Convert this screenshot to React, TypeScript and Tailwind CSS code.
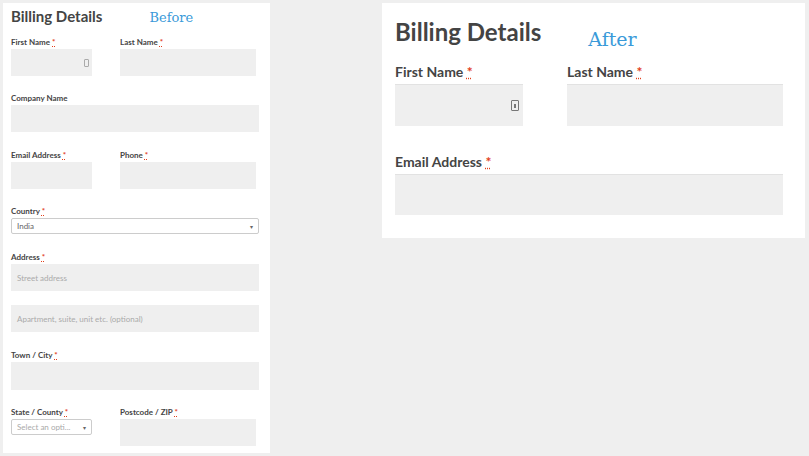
const Req = () => <span className="text-[#e2401c] underline decoration-dotted">*</span>;

function SmallLabel({ children, req = true }: { children: string; req?: boolean }) {
  return (
    <div className="text-[8px] font-bold text-[#444] leading-[10px] h-[10px]">
      {children} {req && <Req />}
    </div>
  );
}

function SmallInput({ placeholder, className = '' }: { placeholder?: string; className?: string }) {
  return (
    <div className={`h-[27px] bg-[#efefef] text-[8px] text-[#aaa] flex items-center px-[6px] ${className}`}>
      {placeholder}
    </div>
  );
}

function Before() {
  return (
    <div className="w-[267px] h-[450px] bg-white pl-[8px] pr-[11px] pt-[4px] relative">
      <div className="flex items-end">
        <h2 className="text-[15px] font-bold text-[#444] leading-[18px]">Billing Details</h2>
        <span className="ml-[47px] text-[13px] text-[#3a9ad9] leading-[14px]" style={{ fontFamily: '"DejaVu Serif", serif' }}>Before</span>
      </div>
      <div className="grid grid-cols-[81px_136px] gap-x-[28px] mt-[12px]">
        <div>
          <SmallLabel>First Name</SmallLabel>
          <div className="mt-[2px] h-[27px] bg-[#efefef] flex items-center justify-end pr-[3px]">
            <div className="w-[5px] h-[8px] border border-[#aaa] rounded-[1px]" />
          </div>
        </div>
        <div>
          <SmallLabel>Last Name</SmallLabel>
          <SmallInput className="mt-[2px]" />
        </div>
      </div>
      <div className="mt-[17px]">
        <SmallLabel req={false}>Company Name</SmallLabel>
        <SmallInput className="mt-[2px]" />
      </div>
      <div className="grid grid-cols-[81px_136px] gap-x-[28px] mt-[18px]">
        <div><SmallLabel>Email Address</SmallLabel><SmallInput className="mt-[2px]" /></div>
        <div><SmallLabel>Phone</SmallLabel><SmallInput className="mt-[2px]" /></div>
      </div>
      <div className="mt-[17px]">
        <SmallLabel>Country</SmallLabel>
        <div className="mt-[2px] h-[16px] border border-[#ccc] rounded-[2px] flex items-center justify-between px-[5px] text-[8px] text-[#666]">
          <span>India</span><span className="text-[6px]">▾</span>
        </div>
      </div>
      <div className="mt-[18px]">
        <SmallLabel>Address</SmallLabel>
        <SmallInput className="mt-[2px]" placeholder="Street address" />
        <SmallInput className="mt-[14px]" placeholder="Apartment, suite, unit etc. (optional)" />
      </div>
      <div className="mt-[18px]">
        <SmallLabel>Town / City</SmallLabel>
        <SmallInput className="mt-[2px] h-[28px]" />
      </div>
      <div className="grid grid-cols-[81px_136px] gap-x-[28px] mt-[17px]">
        <div>
          <SmallLabel>State / County</SmallLabel>
          <div className="mt-[2px] h-[16px] border border-[#ccc] rounded-[2px] flex items-center justify-between px-[5px] text-[8px] text-[#aaa]">
            <span>Select an opti...</span><span className="text-[6px] text-[#666]">▾</span>
          </div>
        </div>
        <div><SmallLabel>Postcode / ZIP</SmallLabel><SmallInput className="mt-[2px]" /></div>
      </div>
    </div>
  );
}

function BigLabel({ children }: { children: string }) {
  return (
    <div className="text-[14px] font-bold text-[#444] leading-[16px]">
      {children} <Req />
    </div>
  );
}

function After() {
  return (
    <div className="w-[423px] h-[235px] bg-white px-[13px] pt-[15px]">
      <div className="flex items-end">
        <h2 className="text-[24px] font-bold text-[#444] leading-[27px]">Billing Details</h2>
        <span className="ml-[47px] text-[19px] text-[#3a9ad9] leading-[20px] -mb-[4px]" style={{ fontFamily: '"DejaVu Serif", serif' }}>After</span>
      </div>
      <div className="grid grid-cols-[128px_216px] gap-x-[44px] mt-[19px]">
        <div>
          <BigLabel>First Name</BigLabel>
          <div className="mt-[4px] h-[42px] bg-[#efefef] border-t border-[#e2e2e2] flex items-center justify-end pr-[4px]">
            <div className="w-[8px] h-[11px] border border-[#777] rounded-[1px] flex items-center justify-center">
              <div className="w-[2px] h-[4px] bg-[#777]" />
            </div>
          </div>
        </div>
        <div>
          <BigLabel>Last Name</BigLabel>
          <div className="mt-[4px] h-[42px] bg-[#efefef] border-t border-[#e2e2e2]" />
        </div>
      </div>
      <div className="mt-[28px] w-[388px]">
        <BigLabel>Email Address</BigLabel>
        <div className="mt-[4px] h-[41px] bg-[#efefef] border-t border-[#e2e2e2]" />
      </div>
    </div>
  );
}

export default function App() {
  return (
    <div className="w-[809px] h-[456px] bg-[#efefef] flex items-start pt-[3px] pl-[3px]" style={{ fontFamily: 'Lato, "Open Sans", sans-serif' }}>
      <Before />
      <div className="ml-[112px]">
        <After />
      </div>
    </div>
  );
}
